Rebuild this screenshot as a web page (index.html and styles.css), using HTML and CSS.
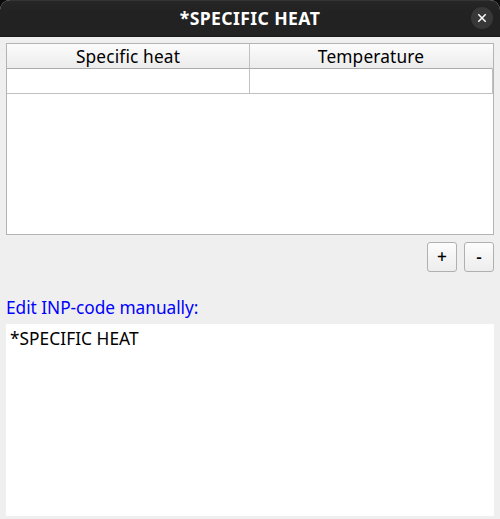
FILE: index.html
```html
<!DOCTYPE html>
<html lang="en">
<head>
<meta charset="utf-8">
<title>*SPECIFIC HEAT</title>
<link rel="stylesheet" href="styles.css">
</head>
<body>
<div class="window">
  <header class="titlebar">
    <h1 class="title">*SPECIFIC HEAT</h1>
    <button class="close" aria-label="Close"><svg viewBox="0 0 22 22"><path d="M7.3 7.3l7.4 7.4M14.7 7.3l-7.4 7.4"/></svg></button>
  </header>
  <main class="content">
    <div class="table">
      <div class="row head"><div class="cell">Specific heat</div><div class="cell">Temperature</div></div>
      <div class="row body"><div class="cell"></div><div class="cell"></div></div>
    </div>
    <div class="actions"><button class="btn">+</button><button class="btn">-</button></div>
    <div class="label">Edit INP-code manually:</div>
    <div class="editor">*SPECIFIC HEAT</div>
  </main>
</div>
</body>
</html>
```
FILE: styles.css
```css
* { box-sizing: border-box; }
body { margin: 0; background: #0c0c0c; font: 17.3px/24px "Noto Sans", "Open Sans", sans-serif; color: #000; white-space: nowrap; }
.window { width: 500px; height: 519px; display: flex; flex-direction: column; background: #efefef; border-radius: 10px 10px 0 0; overflow: hidden; }
.titlebar { height: 37px; display: grid; grid-template-columns: 29px 1fr 29px; align-items: center; padding-bottom: 2px; background: linear-gradient(#262626, #222 30%, #222 95%, #181818); border-top: 1px solid #343434; color: #fff; }
.title { grid-column: 2; margin: 0; text-align: center; font-size: 17.6px; font-weight: 700; letter-spacing: 0.4px; }
.close { width: 22px; height: 22px; padding: 0; border: 0; border-radius: 50%; background: #383838; }
.close svg { display: block; stroke: #fff; stroke-width: 1.5; fill: none; }
.content { flex: 1; display: flex; flex-direction: column; padding: 6px 6px 3px; }
.table { height: 192px; border: 1px solid #b4b4b4; background: #fff; }
.row { display: grid; grid-template: 25px / 243px 243px; height: 25px; }
.cell { border-right: 1px solid #c0c0c0; border-bottom: 1px solid #c0c0c0; }
.head { width: 486px; background: linear-gradient(#fcfcfc, #ebebeb); text-align: center; letter-spacing: 0.15px; line-height: 26px; }
.head .cell { border-bottom-color: #ababab; }
.head .cell:last-child { border-right-color: transparent; }
.actions { display: flex; justify-content: flex-end; gap: 7px; margin-top: 7px; }
.btn { width: 30px; height: 30px; padding: 0; border: 1px solid #b0b0b0; border-radius: 3px; background: linear-gradient(#fcfcfc, #ededed); font: inherit; font-weight: 500; color: #000; }
.label { margin-top: 24px; height: 28px; color: #0000ff; letter-spacing: -0.04px; }
.editor { flex: 1; background: #fff; padding: 3px 4px; letter-spacing: 0.05px; }
```
